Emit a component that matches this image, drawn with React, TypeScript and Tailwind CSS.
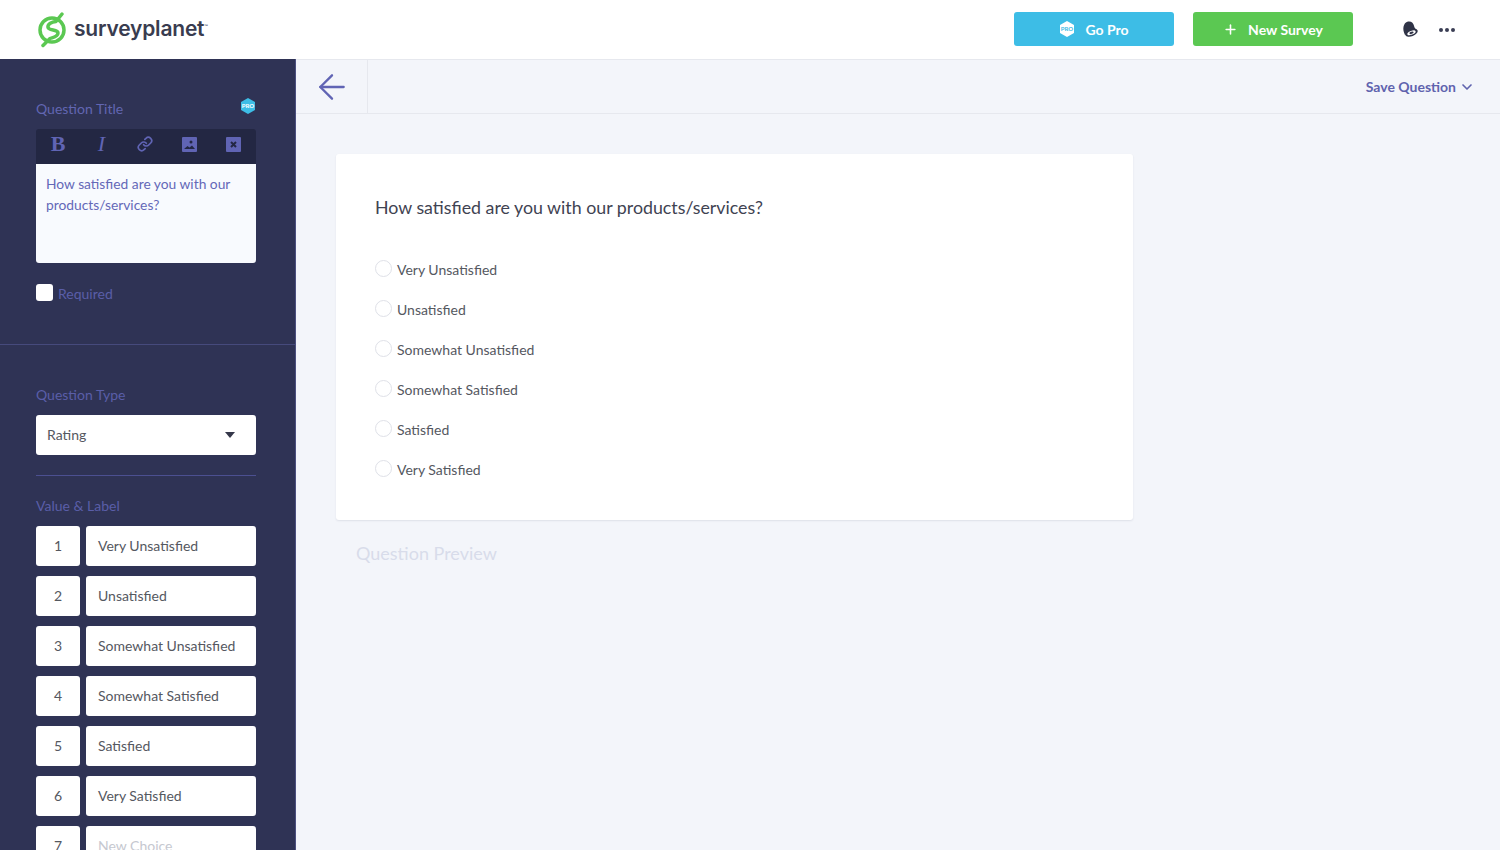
import { Link, Plus, ChevronDown, ArrowLeft } from "lucide-react";

const choices = [
  "Very Unsatisfied",
  "Unsatisfied",
  "Somewhat Unsatisfied",
  "Somewhat Satisfied",
  "Satisfied",
  "Very Satisfied",
];

const ProBadge = ({ fill, text, size }: { fill: string; text: string; size: number }) => (
  <svg width={size} height={size} viewBox="0 0 16 16">
    <path d="M8 0 15 4v8l-7 4-7-4V4z" fill={fill} />
    <text x="8" y="10.2" textAnchor="middle" fontSize="6" fontWeight="700" fill={text} fontFamily="Lato, sans-serif">
      PRO
    </text>
  </svg>
);

const Logo = () => (
  <div className="flex items-center">
    <svg width="30" height="36" viewBox="0 0 30 36" fill="none" className="mr-[6px]">
      <circle cx="14" cy="18" r="12" stroke="#5bc852" strokeWidth="3.500" />
      <path
        d="M24 2 18 9.500C14 10 9.500 11.500 10 15.200 10.500 19 20 17 20 21 20 25 14 25.500 12 26.500L5 33.500"
        stroke="#5bc852"
        strokeWidth="3.500"
        strokeLinecap="round"
        strokeLinejoin="round"
      />
    </svg>
    <span className="font-['Inter',sans-serif] text-[21px] font-semibold tracking-[-0.2px] text-[#393c4f] leading-none mb-[2px]">
      surveyplanet
    </span>
    <span className="text-[5px] text-[#393c4f] self-start mt-[11px]">™</span>
  </div>
);

const Header = () => (
  <header className="h-[59px] shrink-0 bg-white flex items-center pl-[38px] pr-[45px]">
    <Logo />
    <div className="ml-auto flex items-center">
      <button className="w-[160px] h-[34px] mb-[1px] rounded-[3px] bg-[#3dbde6] text-white flex items-center justify-center gap-[10px] text-[14px] font-bold mr-[19px]">
        <ProBadge fill="#ffffff" text="#3dbde6" size={16} />
        Go Pro
      </button>
      <button className="w-[160px] h-[34px] mb-[1px] rounded-[3px] bg-[#5bc852] text-white flex items-center justify-center gap-[10px] text-[14px] font-bold mr-[49px]">
        <Plus size={15} strokeWidth={2.500} />
        New Survey
      </button>
      <svg width="17" height="17" viewBox="0 0 17 17" className="mr-[20px]">
        <path d="M6 .6c3.500-.6 5.500 1.800 6 4.200.4 1.800 1 2.800 2.500 4L3 14C1.500 11 1 8.500 1.500 5.800 2 3.300 3.500 1 6 .6z" fill="#2f3346" />
        <ellipse cx="9.500" cy="11.800" rx="6.500" ry="3.500" transform="rotate(-22 9.500 11.800)" fill="#2f3346" />
        <ellipse cx="9.500" cy="11.800" rx="4.400" ry="1.900" transform="rotate(-22 9.500 11.800)" fill="#ffffff" />
        <ellipse cx="9.500" cy="11.800" rx="2.200" ry="1.100" transform="rotate(-22 9.500 11.800)" fill="#2f3346" />
      </svg>
      <div className="flex gap-[2px]">
        <span className="w-[4px] h-[4px] rounded-full bg-[#3a3e54]" />
        <span className="w-[4px] h-[4px] rounded-full bg-[#3a3e54]" />
        <span className="w-[4px] h-[4px] rounded-full bg-[#3a3e54]" />
      </div>
    </div>
  </header>
);

const Toolbar = () => (
  <div className="h-[35px] bg-[#232743] rounded-t-[3px] flex items-center pb-[5px] text-[#6064b4]">
    <div className="w-[44px] flex justify-center font-['Liberation_Serif',serif] text-[22px] leading-none font-bold">B</div>
    <div className="w-[43px] flex justify-center font-['Liberation_Serif',serif] text-[22px] leading-none italic">I</div>
    <div className="w-[44px] flex justify-center"><Link size={16} strokeWidth={2.500} /></div>
    <div className="w-[44px] flex justify-center">
      <svg width="15" height="15" viewBox="0 0 15 15">
        <rect width="15" height="15" rx="1" fill="#6064b4" />
        <path d="M2 12l3.500-3 2 1.500 2.500-2 3 3.500z" fill="#232743" />
        <circle cx="9" cy="5" r="1.500" fill="#232743" />
      </svg>
    </div>
    <div className="w-[44px] flex justify-center">
      <svg width="15" height="15" viewBox="0 0 15 15">
        <rect width="15" height="15" rx="1" fill="#6064b4" />
        <path d="M5 5l5 5M10 5l-5 5" stroke="#232743" strokeWidth="2" />
      </svg>
    </div>
  </div>
);

const Sidebar = () => (
  <aside className="w-[296px] shrink-0 bg-[#2f3355] border-r border-[#4c5080] text-[14px]">
    <div className="h-[286px] pl-[36px] pr-[39px] pt-[40px] border-b border-[#464a7c]">
      <div className="flex items-center justify-between h-[20px] mb-[10px]">
        <span className="text-[#6266b2] leading-[20px]">Question Title</span>
        <span className="-mt-[7px]"><ProBadge fill="#3dbde6" text="#ffffff" size={16} /></span>
      </div>
      <Toolbar />
      <div className="h-[99px] bg-[#f8fafe] rounded-b-[3px] px-[10px] pt-[9px] text-[13.800px] text-[#6468b8] leading-[21px]">
        How satisfied are you with our
        <br />
        products/services?
      </div>
      <div className="flex mt-[21px]">
        <span className="w-[17px] h-[17px] bg-white rounded-[3px]" />
        <span className="ml-[5px] text-[#5a5ea8] leading-[20px]">Required</span>
      </div>
    </div>
    <div className="pl-[36px] pr-[39px] pt-[40px]">
      <div className="h-[20px] mb-[10px] leading-[20px] text-[#5a5ea8]">Question Type</div>
      <div className="h-[40px] bg-white rounded-[3px] flex items-center pl-[11px] pr-[21px] text-[#55585f]">
        <span className="mb-[2px]">Rating</span>
        <span className="ml-auto w-0 h-0 border-x-[5px] border-x-transparent border-t-[6px] border-t-[#35384a]" />
      </div>
      <div className="border-t border-[#4c5091] mt-[20px] mb-[20px]" />
      <div className="h-[20px] mb-[10px] leading-[20px] text-[#5a5ea8]">Value &amp; Label</div>
      <div className="flex flex-col gap-[10px]">
        {[...choices, "New Choice"].map((el, index) => (
          <div key={index} className="flex gap-[6px] h-[40px]">
            <div className="w-[44px] bg-white rounded-[3px] flex items-center justify-center pb-[2px] text-[#55585f]">{index + 1}</div>
            <div className={`flex-1 bg-white rounded-[3px] flex items-center pl-[12px] pb-[2px] ${index === 6 ? "text-[#c6c8d0]" : "text-[#55585f]"}`}>
              {el}
            </div>
          </div>
        ))}
      </div>
    </div>
  </aside>
);

const Main = () => (
  <main className="flex-1 bg-[#f3f5fa]">
    <div className="h-[55px] border-y border-[#e6e8ee] flex items-center pr-[25px]">
      <div className="w-[72px] h-full border-r border-[#e6e8ee] flex items-center justify-center text-[#6064b4]">
        <ArrowLeft size={40} strokeWidth={1.400} />
      </div>
      <div className="ml-auto flex items-center gap-[3px] text-[#5f63ae] text-[14px] font-bold">
        Save Question
        <ChevronDown size={16} strokeWidth={2.500} />
      </div>
    </div>
    <div className="pl-[40px] pt-[40px]">
      <div className="w-[797px] h-[366px] bg-white rounded-[3px] shadow-[0_1px_2px_rgba(40,45,80,0.1)] pl-[39px] pt-[41px]">
        <div className="text-[17.800px] leading-[24px] text-[#3f4352] mb-[41px]">
          How satisfied are you with our products/services?
        </div>
        <div className="flex flex-col gap-[20px]">
          {choices.map((el, index) => (
            <div key={index} className="flex h-[20px] text-[14px] text-[#55585f]">
              <span className="w-[17px] h-[17px] rounded-full border border-[#dfe1e8] bg-white" />
              <span className="ml-[5px] leading-[20px]">{el}</span>
            </div>
          ))}
        </div>
      </div>
      <div className="ml-[20px] mt-[21px] text-[18px] leading-[24px] text-[#d8dcea]">Question Preview</div>
    </div>
  </main>
);

export default function App() {
  return (
    <div className="h-[850px] w-[1500px] overflow-hidden flex flex-col font-['Lato',sans-serif]">
      <Header />
      <div className="flex flex-1 min-h-0">
        <Sidebar />
        <Main />
      </div>
    </div>
  );
}
